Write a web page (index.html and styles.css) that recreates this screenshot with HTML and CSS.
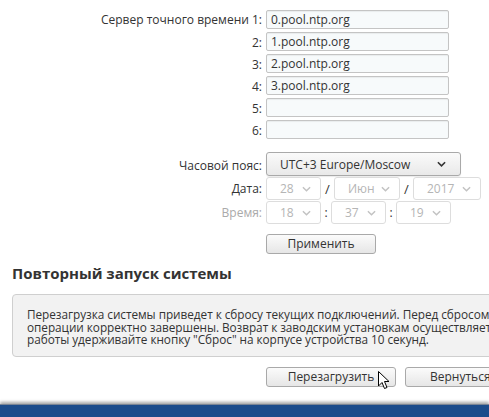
FILE: index.html
```html
<!DOCTYPE html>
<html lang="ru">
<head>
<meta charset="utf-8">
<link rel="stylesheet" href="styles.css">
</head>
<body>
<div class="page">
  <div class="form">
    <label class="lbl">Сервер точного времени 1:</label><div class="field pad"><div class="input">0.pool.ntp.org</div></div>
    <label class="lbl">2:</label><div class="field pad"><div class="input">1.pool.ntp.org</div></div>
    <label class="lbl">3:</label><div class="field pad"><div class="input">2.pool.ntp.org</div></div>
    <label class="lbl">4:</label><div class="field pad"><div class="input">3.pool.ntp.org</div></div>
    <label class="lbl">5:</label><div class="field pad"><div class="input"></div></div>
    <label class="lbl">6:</label><div class="field pad"><div class="input"></div></div>

    <label class="lbl tz-lbl">Часовой пояс:</label>
    <div class="field tz-field">
      <div class="select tz"><span>UTC+3 Europe/Moscow</span><svg class="chev dark" viewBox="0 0 10 6"><path d="M1 1 L5 5 L9 1" /></svg></div>
    </div>

    <label class="lbl">Дата:</label>
    <div class="field row">
      <div class="select dis w-day"><span>28</span><svg class="chev" viewBox="0 0 10 6"><path d="M1 1 L5 5 L9 1" /></svg></div>
      <span class="sep">/</span>
      <div class="select dis w-mon"><span>Июн</span><svg class="chev" viewBox="0 0 10 6"><path d="M1 1 L5 5 L9 1" /></svg></div>
      <span class="sep">/</span>
      <div class="select dis w-year"><span>2017</span><svg class="chev" viewBox="0 0 10 6"><path d="M1 1 L5 5 L9 1" /></svg></div>
    </div>

    <label class="lbl muted">Время:</label>
    <div class="field row">
      <div class="select dis w-day"><span>18</span><svg class="chev" viewBox="0 0 10 6"><path d="M1 1 L5 5 L9 1" /></svg></div>
      <span class="sep colon">:</span>
      <div class="select dis w-min"><span>37</span><svg class="chev" viewBox="0 0 10 6"><path d="M1 1 L5 5 L9 1" /></svg></div>
      <span class="sep colon">:</span>
      <div class="select dis w-min"><span>19</span><svg class="chev" viewBox="0 0 10 6"><path d="M1 1 L5 5 L9 1" /></svg></div>
    </div>

    <div></div>
    <div class="field apply-field"><button class="btn apply">Применить</button></div>
  </div>

  <h2 class="heading">Повторный запуск системы</h2>
  <div class="info">
    <p class="line">Перезагрузка системы приведет к сбросу текущих подключений. Перед сбросом убедитесь, что все</p>
    <p class="line">операции корректно завершены. Возврат к заводским установкам осуществляется, для этого во время</p>
    <p class="line">работы удерживайте кнопку "Сброс" на корпусе устройства 10 секунд.</p>
  </div>
  <div class="actions">
    <button class="btn reboot">Перезагрузить</button>
    <button class="btn back">Вернуться к заводским установкам</button>
    <svg class="cursor" viewBox="0 0 12 19" width="12" height="19"><path d="M0.5 0.5 L0.5 15 L4 11.5 L6.5 17.5 L9 16.5 L6.5 10.5 L11 10.5 Z" fill="#fff" stroke="#000" stroke-width="1"/></svg>
  </div>
</div>
<div class="bottombar"></div>
</body>
</html>
```
FILE: styles.css
```css
html, body {
  margin: 0;
  padding: 0;
  background: #fff;
  overflow: hidden;
}
body {
  width: 489px;
  height: 417px;
  position: relative;
  font-family: "Open Sans", "DejaVu Sans", sans-serif;
  font-size: 12px;
  color: #333;
}
.page {
  padding-top: 10px;
}
.form {
  display: grid;
  grid-template-columns: 262px 1fr;
  column-gap: 4px;
  row-gap: 1px;
  align-items: start;
}
.lbl {
  text-align: right;
  white-space: nowrap;
  color: #333;
  line-height: 19px;
  align-self: center;
}
.lbl.muted { color: #aaa; }
.field { display: flex; align-items: center; }
.field.pad { padding-bottom: 2px; }
.form > .lbl:first-child { align-self: start; }
.input {
  box-sizing: border-box;
  width: 183px;
  height: 19px;
  border: 1px solid #c4c4c4;
  border-radius: 2px;
  background: #f7fafb;
  padding: 0 4px;
  line-height: 17px;
  color: #333;
  box-shadow: inset 0 1px 1px rgba(0,0,0,0.06);
}
.tz-lbl { margin-top: 12px; }
.tz-field { margin-top: 10px; }
.select {
  box-sizing: border-box;
  height: 23px;
  border: 1px solid #ddd;
  border-radius: 3px;
  display: flex;
  align-items: center;
  justify-content: space-between;
  padding: 0 9px 0 13px;
  background: #fff;
}
.row { height: 23px; }
.select.tz {
  width: 195px;
  height: 24px;
  border: 1px solid #a9a9a9;
  background: linear-gradient(#fafafa, #e9e9e9);
  color: #333;
  padding: 0 14px 0 13px;
  box-shadow: 0 1px 1px rgba(0,0,0,0.08);
}
.select.dis {
  color: #b5b5b5;
}
.chev {
  width: 9px;
  height: 6px;
  fill: none;
  stroke: #c2c2c2;
  stroke-width: 1.6;
}
.chev.dark { stroke: #333; stroke-width: 1.8; }
.w-day { width: 55px; }
.w-mon { width: 66px; }
.w-year { width: 68px; }
.w-min { width: 55px; }
.sep {
  width: 13px;
  text-align: center;
  color: #333;
  font-size: 13px;
}
.sep.colon { width: 10px; font-size: 12px; }
.apply-field { margin-top: 9px; }
.btn {
  box-sizing: border-box;
  flex-shrink: 0;
  font-family: inherit;
  font-size: 12px;
  color: #333;
  border: 1px solid #a9a9a9;
  border-radius: 3px;
  background: linear-gradient(#fbfbfb, #e6e6e6);
  height: 20px;
  padding: 0;
  line-height: 18px;
}
.apply { width: 110px; }
.heading {
  margin: 9px 0 0 12px;
  font-size: 15px;
  font-weight: bold;
  color: #333;
  line-height: 20px;
}
.info {
  box-sizing: border-box;
  margin: 11px 0 0 12px;
  width: 640px;
  height: 63px;
  border: 1px solid #cfcfcf;
  border-radius: 4px;
  background: #f2f2f2;
  padding: 13px 0 0 14px;
  color: #333;
  white-space: nowrap;
  letter-spacing: -0.05px;
}
.line {
  margin: 0;
  height: 12.5px;
  line-height: 12.5px;
  font-size: 11.8px;
}
.actions {
  position: relative;
  display: flex;
  gap: 9px;
  margin: 10px 0 0 266px;
  white-space: nowrap;
}
.reboot { width: 130px; }
.back { width: 220px; text-align: left; padding-left: 24px; }
.cursor {
  position: absolute;
  left: 112px;
  top: 4px;
}
.bottombar {
  position: absolute;
  left: 0;
  right: 0;
  bottom: 0;
  height: 12px;
  background: #1c4c8b;
  box-shadow: 0 -2px 3px rgba(0,0,0,0.35);
  border-top: 1px solid #7a8595;
}
```
